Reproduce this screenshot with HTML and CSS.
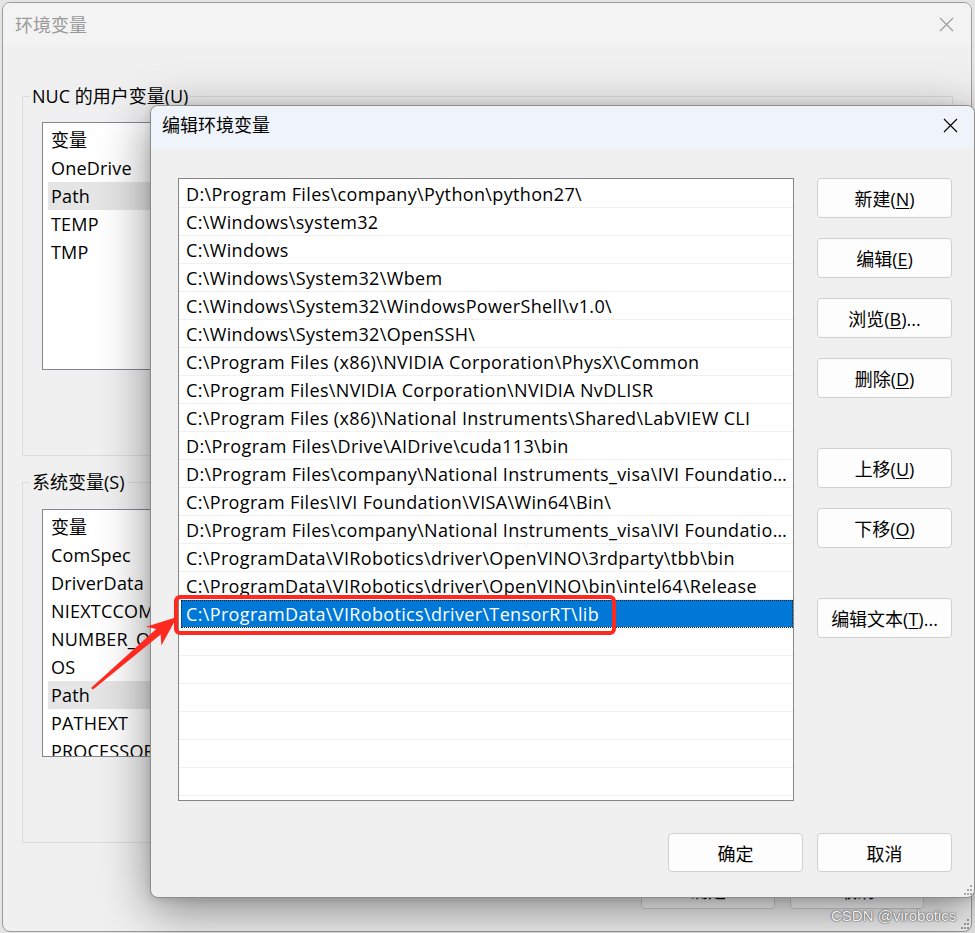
FILE: index.html
```html
<!DOCTYPE html>
<html lang="zh-CN">
<head>
  <meta charset="UTF-8">
  <title>编辑环境变量</title>
  <link rel="stylesheet" href="styles.css">
</head>
<body>

  <!-- 环境变量 (behind) -->
  <div class="window window-back">
    <div class="titlebar">
      <span>环境变量</span>
      <svg class="close-icon" width="15" height="15" viewBox="0 0 15 15"><path d="M1 1L14 14M14 1L1 14" stroke="currentColor" stroke-width="1.1" fill="none"/></svg>
    </div>
    <div class="back-body">
      <fieldset class="group group-user">
        <legend>NUC 的用户变量(U)</legend>
        <div class="varlist">
          <div class="varlist-head">变量</div>
          <div class="varlist-row">OneDrive</div>
          <div class="varlist-row is-current">Path</div>
          <div class="varlist-row">TEMP</div>
          <div class="varlist-row">TMP</div>
        </div>
      </fieldset>
      <fieldset class="group group-sys">
        <legend>系统变量(S)</legend>
        <div class="varlist">
          <div class="varlist-head">变量</div>
          <div class="varlist-row">ComSpec</div>
          <div class="varlist-row">DriverData</div>
          <div class="varlist-row">NIEXTCCOMPILERSUPP</div>
          <div class="varlist-row">NUMBER_OF_PROCESSORS</div>
          <div class="varlist-row">OS</div>
          <div class="varlist-row is-current">Path</div>
          <div class="varlist-row">PATHEXT</div>
          <div class="varlist-row">PROCESSOR_ARCHITECTURE</div>
        </div>
      </fieldset>
      <div class="back-actions">
        <button class="btn btn-back">确定</button>
        <button class="btn btn-back">取消</button>
      </div>
    </div>
    <svg class="grip grip-back" width="10" height="10" viewBox="0 0 10 10"><path d="M8 0h2v2H8zM5 4h2v2H5zM8 4h2v2H8zM2 8h2v2H2zM5 8h2v2H5zM8 8h2v2H8z" fill="#9c9c9c"/></svg>
  </div>

  <!-- 编辑环境变量 (front) -->
  <div class="window window-front">
    <div class="titlebar">
      <span>编辑环境变量</span>
      <svg class="close-icon" width="15" height="15" viewBox="0 0 15 15"><path d="M1 1L14 14M14 1L1 14" stroke="currentColor" stroke-width="1.1" fill="none"/></svg>
    </div>
    <div class="front-body">
      <div class="front-main">
        <div class="pathlist">
          <div class="path-row">D:\Program Files\company\Python\python27\</div>
          <div class="path-row">C:\Windows\system32</div>
          <div class="path-row">C:\Windows</div>
          <div class="path-row">C:\Windows\System32\Wbem</div>
          <div class="path-row">C:\Windows\System32\WindowsPowerShell\v1.0\</div>
          <div class="path-row">C:\Windows\System32\OpenSSH\</div>
          <div class="path-row">C:\Program Files (x86)\NVIDIA Corporation\PhysX\Common</div>
          <div class="path-row">C:\Program Files\NVIDIA Corporation\NVIDIA NvDLISR</div>
          <div class="path-row">C:\Program Files (x86)\National Instruments\Shared\LabVIEW CLI</div>
          <div class="path-row">D:\Program Files\Drive\AIDrive\cuda113\bin</div>
          <div class="path-row">D:\Program Files\company\National Instruments_visa\IVI Foundation\VISA\Win64\Lib_x64\msc</div>
          <div class="path-row">C:\Program Files\IVI Foundation\VISA\Win64\Bin\</div>
          <div class="path-row">D:\Program Files\company\National Instruments_visa\IVI Foundation\VISA\Win64\Bin\</div>
          <div class="path-row">C:\ProgramData\VIRobotics\driver\OpenVINO\3rdparty\tbb\bin</div>
          <div class="path-row">C:\ProgramData\VIRobotics\driver\OpenVINO\bin\intel64\Release</div>
          <div class="path-row is-selected">C:\ProgramData\VIRobotics\driver\TensorRT\lib</div>
          <div class="path-row"></div>
          <div class="path-row"></div>
          <div class="path-row"></div>
          <div class="path-row"></div>
          <div class="path-row"></div>
          <div class="path-row"></div>
          <div class="path-row"></div>
        </div>
        <div class="btn-col">
          <button class="btn">新建(<u>N</u>)</button>
          <button class="btn">编辑(<u>E</u>)</button>
          <button class="btn">浏览(<u>B</u>)...</button>
          <button class="btn">删除(<u>D</u>)</button>
          <button class="btn btn-gap">上移(<u>U</u>)</button>
          <button class="btn">下移(<u>O</u>)</button>
          <button class="btn btn-gap">编辑文本(<u>T</u>)...</button>
        </div>
      </div>
      <div class="front-foot">
        <button class="btn btn-foot">确定</button>
        <button class="btn btn-foot">取消</button>
      </div>
    </div>
    <svg class="grip grip-front" width="10" height="10" viewBox="0 0 10 10"><path d="M8 0h2v2H8zM5 4h2v2H5zM8 4h2v2H8zM2 8h2v2H2zM5 8h2v2H5zM8 8h2v2H8z" fill="#a8a8a8"/></svg>
  </div>

  <!-- annotation -->
  <div class="mark-box"></div>
  <svg class="mark-arrow" width="100" height="100" viewBox="85 595 100 100">
    <polygon points="91,688 156.2,629 146.2,626.8 177,617 161.4,645.4 160.6,634.4 93,689.5" fill="#fe2a1f"/>
  </svg>

  <div class="watermark">CSDN @virobotics</div>

</body>
</html>
```

FILE: styles.css
```css
/* General */
* {
  box-sizing: border-box;
}

html, body {
  margin: 0;
  padding: 0;
}

body {
  position: relative;
  width: 975px;
  height: 933px;
  overflow: hidden;
  background-color: #e4e4e4;
  font-family: "Open Sans", "Noto Sans CJK SC", sans-serif;
  font-size: 18px;
  color: #000;
}

/* Windows */
.window {
  position: absolute;
  display: flex;
  flex-direction: column;
  background-color: #f0f0f0;
  border: 1px solid #9c9c9c;
  border-radius: 8px;
  overflow: hidden;
}

.window-back {
  left: 2px;
  top: 2px;
  width: 970px;
  height: 930px;
}

.window-front {
  left: 150px;
  top: 105px;
  width: 825px;
  height: 793px;
  border-color: #8c8c8c;
  box-shadow: 0 12px 50px rgba(0, 0, 0, 0.45), 0 2px 8px rgba(0, 0, 0, 0.12);
}

.titlebar {
  flex: none;
  display: flex;
  align-items: center;
  justify-content: space-between;
  line-height: 24px;
}

.window-back .titlebar {
  height: 43px;
  padding: 0 17px 0 12px;
  background-color: #f3f3f3;
  color: #9a9a9a;
}

.window-front .titlebar {
  height: 42px;
  padding: 0 16px 4px 11px;
  background-color: #eef4f9;
  color: #000;
}

.close-icon {
  display: block;
}

/* Back window content */
.back-body {
  padding: 38px 18px 0 19px;
}

.group {
  margin: 0;
  min-width: 0;
  border: 1px solid #dcdcdc;
  padding: 14px 0 85px 7px;
}

.group legend {
  padding: 0 2px;
  line-height: 24px;
}

.group-sys {
  margin-top: 14px;
  padding-top: 15px;
}

.varlist {
  margin-left: 12px;
  height: 248px;
  background-color: #fff;
  border: 1px solid #828790;
  overflow: hidden;
}

.varlist-head {
  height: 31px;
  line-height: 31px;
  padding: 2px 0 0 8px;
}

.varlist-row {
  height: 28px;
  line-height: 28px;
  margin-left: 5px;
  padding-left: 3px;
  white-space: nowrap;
  letter-spacing: 0.2px;
}

.varlist-row.is-current {
  background-color: #e5e5e5;
}

.back-actions {
  display: flex;
  justify-content: flex-end;
  gap: 15px;
  margin-top: 27px;
  padding-right: 29px;
}

/* Buttons */
.btn {
  height: 40px;
  padding: 0;
  background-color: #fdfdfd;
  border: 1px solid #d0d0d0;
  border-radius: 4px;
  font: inherit;
  color: #000;
}

.btn u {
  text-underline-offset: 2px;
}

.btn-back {
  width: 134px;
  height: 39px;
}

/* Front window content */
.front-body {
  display: flex;
  flex-direction: column;
  padding: 30px 22px 0 27px;
}

.front-main {
  display: flex;
  gap: 23px;
}

.pathlist {
  width: 616px;
  height: 623px;
  padding-top: 1px;
  background-color: #fff;
  border: 1px solid #858585;
  overflow: hidden;
}

.path-row {
  height: 28px;
  line-height: 28px;
  padding: 0 1px 0 7px;
  border-bottom: 1px solid #f0f0f0;
  white-space: nowrap;
  overflow: hidden;
  text-overflow: ellipsis;
  letter-spacing: 0.35px;
}

.path-row.is-selected {
  margin-left: 2px;
  padding-left: 5px;
  background-color: #0078d7;
  color: #fff;
  outline: 1px dotted #222;
  outline-offset: -1px;
}

.btn-col {
  display: flex;
  flex-direction: column;
  gap: 20px;
  width: 135px;
}

.btn-gap {
  margin-top: 30px;
}

.front-foot {
  display: flex;
  justify-content: flex-end;
  gap: 14px;
  margin-top: 32px;
}

.btn-foot {
  width: 135px;
  height: 39px;
}

/* Resize grips */
.grip {
  position: absolute;
  right: 2px;
  bottom: 2px;
}

/* Annotation */
.mark-box {
  position: absolute;
  left: 174px;
  top: 595px;
  width: 442px;
  height: 40px;
  border: 4px solid #fe2a1f;
  border-radius: 6px;
}

.mark-arrow {
  position: absolute;
  left: 85px;
  top: 595px;
}

.watermark {
  position: absolute;
  left: 831px;
  top: 906px;
  font-family: "Liberation Sans", Arial, sans-serif;
  font-size: 15px;
  line-height: 20px;
  color: #f4f4f4;
  text-shadow: 0 0 1px #555, 0 0 1px #555, 0 0 2px #777;
}
```
